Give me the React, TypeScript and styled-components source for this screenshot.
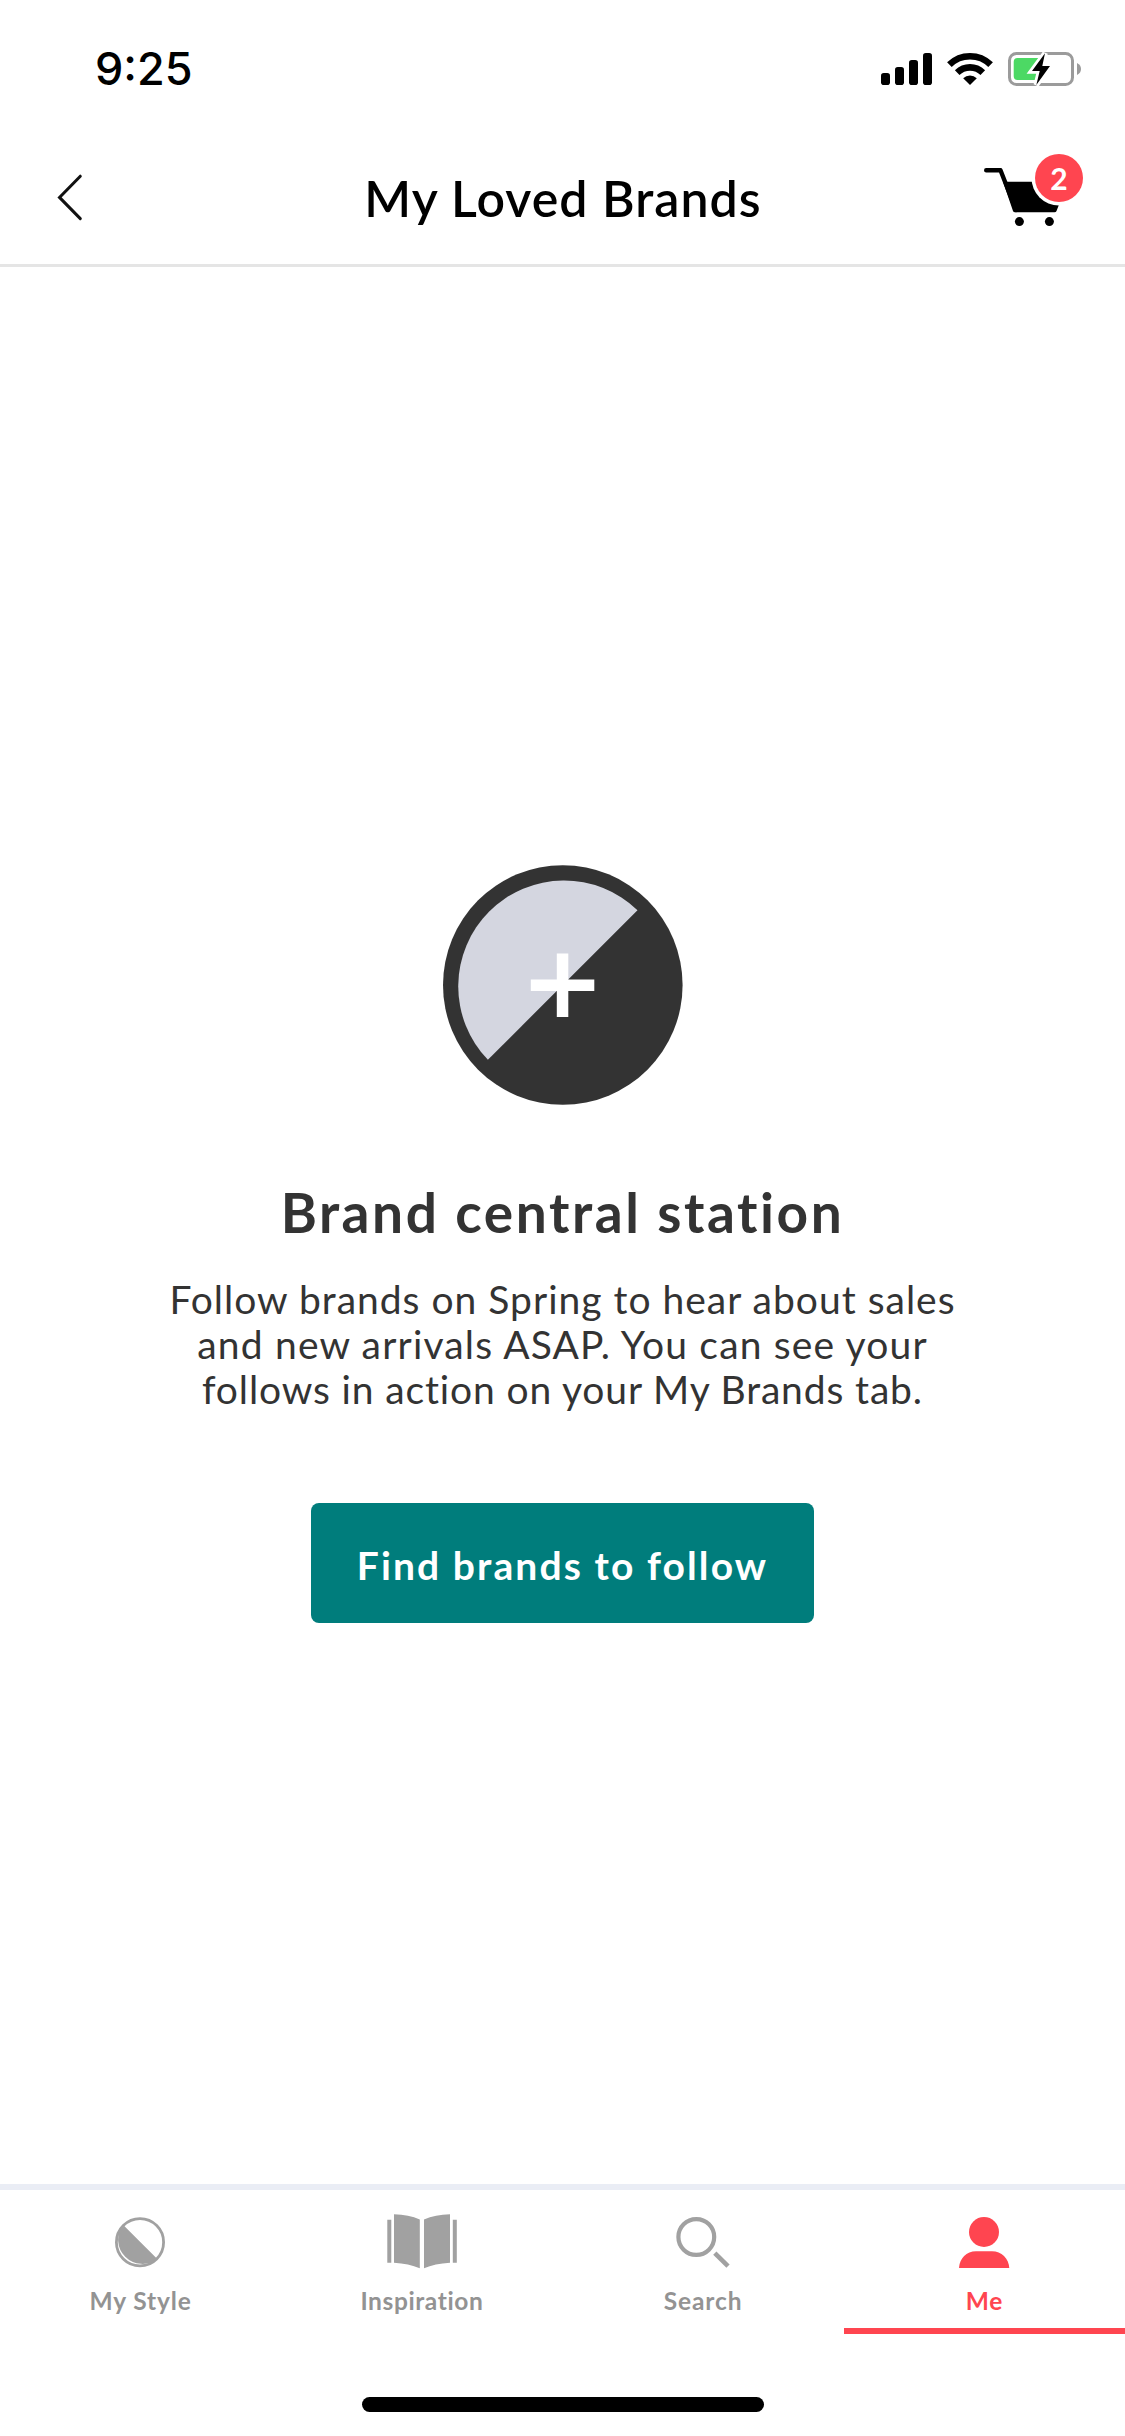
import React from "react";
import styled, { createGlobalStyle } from "styled-components";

const GlobalStyle = createGlobalStyle`
  *, *::before, *::after { box-sizing: border-box; }
  body { margin: 0; background: #fff; }
  h1, h2, p { margin: 0; }
  button { border: 0; padding: 0; background: none; font: inherit; cursor: pointer; }
  svg { display: block; flex: none; }
`;

const Screen = styled.div`
  display: flex;
  flex-direction: column;
  width: 1125px;
  height: 2436px;
  overflow: hidden;
  background: #fff;
  color: #333;
  font-family: Lato, "Open Sans", sans-serif;
`;

const StatusBar = styled.div`
  display: flex;
  align-items: center;
  justify-content: space-between;
  height: 132px;
  padding: 6px 44px 0 95px;
`;

const Clock = styled.span`
  font: 550 45px/54px Inter, sans-serif;
  letter-spacing: 0;
  color: #000;
`;

const StatusIcons = styled.div`
  display: flex;
  align-items: center;
  gap: 15px;
`;

const Header = styled.header`
  display: grid;
  grid-template-columns: 1fr auto 1fr;
  align-items: center;
  height: 135px;
  padding: 0 42px;
  border-bottom: 3px solid #e5e5e5;
`;

const BackButton = styled.button`
  justify-self: start;
  width: 27px;
  margin: 0 0 2px 15px;
`;

const Title = styled.h1<{ $spacing: number }>`
  padding-bottom: 1px;
  font-size: 50px;
  font-weight: 600;
  line-height: 60px;
  letter-spacing: ${(p) => p.$spacing}px;
  margin-right: -${(p) => p.$spacing}px;
  white-space: nowrap;
  color: #000;
`;

const CartButton = styled.button`
  position: relative;
  align-self: start;
  justify-self: end;
  width: 100px;
  height: 80px;
  margin-top: 18px;
`;

const Badge = styled.span`
  position: absolute;
  top: 4px;
  right: 0;
  width: 48px;
  height: 48px;
  border-radius: 50%;
  background: #ff4550;
  box-shadow: 0 0 0 3.5px #fff;
  color: #fff;
  font-size: 30px;
  font-weight: 700;
  line-height: 49px;
  text-align: center;
`;

const Content = styled.main`
  display: flex;
  flex: 1;
  flex-direction: column;
  align-items: center;
  padding-top: 598px;
`;

const Heading = styled.h2`
  margin: 74px 0 32px;
  font-size: 55px;
  font-weight: 700;
  line-height: 66px;
  letter-spacing: 2.55px;
  white-space: nowrap;
`;

const Message = styled.p`
  display: flex;
  flex-direction: column;
  align-items: center;
  padding-right: 1px;
  font-size: 39px;
  line-height: 45px;
`;

const Line = styled.span<{ $spacing: number }>`
  letter-spacing: ${(p) => p.$spacing}px;
  margin-right: -${(p) => p.$spacing}px;
  white-space: nowrap;
`;

const PrimaryButton = styled.button`
  width: 503px;
  height: 120px;
  margin-top: 91px;
  padding-top: 3px;
  border-radius: 8px;
  background: #007d7c;
  color: #fff;
  font-size: 39px;
  font-weight: 700;
  letter-spacing: 2.1px;
  white-space: nowrap;
`;

const TabBar = styled.nav`
  display: grid;
  grid-template-columns: repeat(4, 1fr);
  height: 150px;
  border-top: 6px solid #eaedf5;
`;

const Tab = styled.button<{ $active?: boolean }>`
  display: flex;
  flex-direction: column;
  align-items: center;
  justify-content: space-between;
  padding: 22px 0 9px;
  border-bottom: 6px solid ${(p) => (p.$active ? "#ff4550" : "transparent")};
  color: ${(p) => (p.$active ? "#ff4550" : "#939393")};
`;

const TabLabel = styled.span<{ $spacing: number }>`
  font-size: 24.5px;
  font-weight: 700;
  line-height: 36px;
  letter-spacing: ${(p) => p.$spacing}px;
`;

const HomeArea = styled.div`
  display: flex;
  justify-content: center;
  height: 102px;
  padding-top: 63px;
`;

const HomeIndicator = styled.div`
  width: 402px;
  height: 15px;
  border-radius: 8px;
  background: #000;
`;

const SignalIcon = () => (
  <svg width="51" height="34" viewBox="881 52 51 34">
    <rect x="881" y="73" width="9" height="12" rx="2.8" />
    <rect x="895" y="67" width="9" height="18" rx="2.8" />
    <rect x="909" y="60" width="9" height="25" rx="2.8" />
    <rect x="923" y="53" width="9" height="32" rx="2.8" />
  </svg>
);

const WifiIcon = () => (
  <svg width="46" height="34" viewBox="947 52 46 34">
    <g fill="none" stroke="#000" strokeWidth="6.6">
      <path d="M949.4 64.6A29.4 29.4 0 0 1 990.6 64.6" />
      <path d="M957.2 72.6A18.4 18.4 0 0 1 982.8 72.6" />
    </g>
    <path d="M970 85L963.2 78.2A9.8 9.8 0 0 1 976.8 78.2Z" />
  </svg>
);

const BatteryIcon = () => (
  <svg width="73" height="38" viewBox="1008 50 73 38">
    <rect x="1009.5" y="53.5" width="63" height="31" rx="7" fill="none" stroke="#9b9b9b" strokeWidth="3" />
    <path d="M1077 63C1079.8 64.3 1081 66.5 1081 69S1079.8 73.7 1077 75Z" fill="#9b9b9b" />
    <path d="M1017.5 58H1041L1037 80H1017.5Q1013.7 80 1013.7 76V62Q1013.7 58 1017.5 58Z" fill="#4cd964" />
    <path
      d="M1045 53.3L1032 71H1039.7L1036.3 85L1050 66H1042.3Z"
      stroke="#fff"
      strokeWidth="5.5"
      fill="#fff"
    />
    <path d="M1045 53.3L1032 71H1039.7L1036.3 85L1050 66H1042.3Z" />
  </svg>
);

const BackIcon = () => (
  <svg width="27" height="48" viewBox="57 173 27 48" fill="none" stroke="#111" strokeWidth="3">
    <path d="M80.3 176.2L59.5 197.4L80.3 218.6" strokeLinecap="round" />
  </svg>
);

const CartIcon = () => (
  <svg width="100" height="80" viewBox="983 150 100 80">
    <path
      d="M986.2 170.2H1000.5L1016 210"
      fill="none"
      stroke="#000"
      strokeWidth="4.4"
      strokeLinecap="round"
      strokeLinejoin="round"
    />
    <path d="M1003 181.7H1068L1056.5 211Q1056 212.3 1054.5 212.3H1015Q1013.5 212.3 1013 211Z" />
    <circle cx="1019.4" cy="221.6" r="4.5" />
    <circle cx="1049.4" cy="221.6" r="4.5" />
  </svg>
);

const BrandIcon = () => (
  <svg width="240" height="240" viewBox="0 0 240 240">
    <circle cx="119.8" cy="120" r="119.8" fill="#333" />
    <path d="M194.5 45.2A105.8 105.8 0 0 0 44.9 194.8Z" fill="#d4d6e0" />
    <path d="M113.8 88.5h11.5v26h26v11.5h-26v26h-11.5v-26h-26v-11.5h26z" fill="#fff" />
  </svg>
);

const StyleIcon = () => (
  <svg width="51" height="56" viewBox="115 2212 51 56">
    <circle cx="140" cy="2242.3" r="23.6" fill="none" stroke="#a1a1a1" strokeWidth="2.8" />
    <path d="M123 2224.7A24.5 24.5 0 0 0 157.3 2259Z" fill="#a1a1a1" />
  </svg>
);

const BookIcon = () => (
  <svg width="70" height="57" viewBox="387.2 2212 70 57" fill="#a1a1a1">
    <path d="M387.5 2219.7h4v43h-4zM453 2219.7h4v43h-4z" />
    <path d="M394.2 2214.3Q409 2214.5 420 2219.5V2268.2Q409 2263.5 394.2 2262.7Z" />
    <path d="M450.2 2214.3Q435.5 2214.5 424.2 2219.5V2268.2Q435 2263.5 450.2 2262.7Z" />
  </svg>
);

const SearchIcon = () => (
  <svg width="54" height="56" viewBox="676 2212 54 56" fill="none" stroke="#a1a1a1">
    <circle cx="696.3" cy="2237" r="17.9" strokeWidth="4.2" />
    <path d="M714.8 2253.2L728 2266.2" strokeWidth="4.6" />
  </svg>
);

const PersonIcon = () => (
  <svg width="51" height="56" viewBox="959 2212 51 56" fill="#ff4550">
    <circle cx="984" cy="2232" r="15" />
    <path d="M959 2268C959.5 2258.5 966.5 2251.3 976 2251.3H992C1001.5 2251.3 1008.7 2258.5 1009.3 2268Z" />
  </svg>
);

const tabs = [
  { label: "My Style", icon: <StyleIcon />, spacing: 0.85 },
  { label: "Inspiration", icon: <BookIcon />, spacing: 0.6 },
  { label: "Search", icon: <SearchIcon />, spacing: 0.9 },
  { label: "Me", icon: <PersonIcon />, spacing: 0.8, active: true },
];

const message = [
  { text: "Follow brands on Spring to hear about sales", spacing: 1 },
  { text: "and new arrivals ASAP. You can see your", spacing: 1.17 },
  { text: "follows in action on your My Brands tab.", spacing: 0.86 },
];

export default function App() {
  return (
    <Screen>
      <GlobalStyle />
      <StatusBar>
        <Clock>9:25</Clock>
        <StatusIcons>
          <SignalIcon />
          <WifiIcon />
          <BatteryIcon />
        </StatusIcons>
      </StatusBar>
      <Header>
        <BackButton aria-label="Back">
          <BackIcon />
        </BackButton>
        <Title $spacing={1.05}>My Loved Brands</Title>
        <CartButton aria-label="Cart">
          <CartIcon />
          <Badge>2</Badge>
        </CartButton>
      </Header>
      <Content>
        <BrandIcon />
        <Heading>Brand central station</Heading>
        <Message>
          {message.map((line) => (
            <Line key={line.text} $spacing={line.spacing}>
              {line.text}
            </Line>
          ))}
        </Message>
        <PrimaryButton>Find brands to follow</PrimaryButton>
      </Content>
      <TabBar>
        {tabs.map((tab) => (
          <Tab key={tab.label} $active={tab.active}>
            {tab.icon}
            <TabLabel $spacing={tab.spacing}>{tab.label}</TabLabel>
          </Tab>
        ))}
      </TabBar>
      <HomeArea>
        <HomeIndicator />
      </HomeArea>
    </Screen>
  );
}
